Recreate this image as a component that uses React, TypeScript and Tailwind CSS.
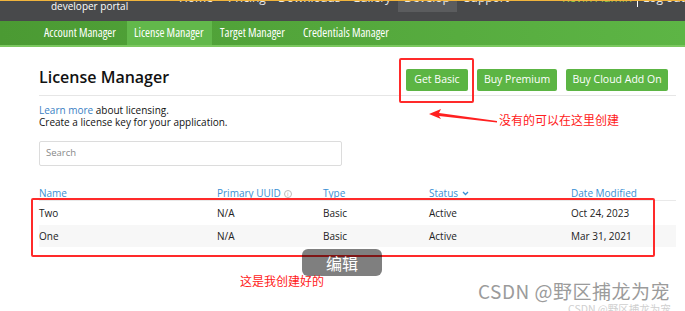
import React from "react";

const cjk = { fontFamily: '"Noto Sans CJK SC", "Noto Sans", sans-serif' };

export default function App() {
  const rows = [
    { name: "Two", uuid: "N/A", type: "Basic", status: "Active", date: "Oct 24, 2023", bg: "bg-white" },
    { name: "One", uuid: "N/A", type: "Basic", status: "Active", date: "Mar 31, 2021", bg: "bg-[#f7f7f7]" },
  ];
  return (
    <div
      className="relative w-[685px] h-[311px] overflow-hidden bg-white text-[#222]"
      style={{ fontFamily: '"Open Sans", "Noto Sans", sans-serif' }}
    >
      {/* top dark header */}
      <div className="relative h-[21px] bg-[#48494b] border-t border-[#f0b43c] overflow-hidden">
        <div className="absolute left-[51px] top-[0px] text-[10px] leading-[11px] text-white">developer portal</div>
        <div className="absolute left-[179px] top-[-9px] flex items-start text-[12px] leading-[12px] text-[#e8e8e8]">
          <span className="w-[49px]">Home</span>
          <span className="w-[50px]">Pricing</span>
          <span className="w-[74px]">Downloads</span>
          <span className="w-[46px]">Gallery</span>
          <span className="w-[59px] -mt-[2px] pt-[2px] pl-[6px] h-[22px] bg-[#5b5c5e]">Develop</span>
          <span className="ml-[7px]">Support</span>
        </div>
        <div className="absolute left-[562px] top-[-9px] flex items-start text-[12px] leading-[12px]">
          <span className="text-[#8cc63f] w-[75px]">Kevin Admin</span>
          <span className="text-white w-[6px] mt-[2px] border-l border-white h-[13px]"></span>
          <span className="text-[#e8e8e8]">Log out</span>
        </div>
      </div>

      {/* green sub nav */}
      <div className="h-[26px] bg-gradient-to-r from-[#4b9a33] to-[#5db545] flex items-stretch pl-[38px] text-[12px] [font-stretch:85%] text-white border-b-2 border-[#7cc860]">
        <div className="w-[89px] pl-[6px] flex items-center">Account Manager</div>
        <div className="w-[85px] pl-[7px] flex items-center bg-[#62b84b]">License Manager</div>
        <div className="w-[84px] pl-[8px] flex items-center">Target Manager</div>
        <div className="pl-[7px] flex items-center">Credentials Manager</div>
      </div>

      {/* content */}
      <div className="pl-[39px] w-[676px]">
        <div className="flex items-start justify-between mt-[22px] pr-[8px]">
          <h1 className="text-[16px] leading-[22px] font-semibold text-[#111] -mt-[3px]">License Manager</h1>
          <div className="flex gap-[9px]">
            <button className="h-[22px] w-[62px] rounded-[2px] bg-[#5cb544] text-white text-[10.5px]">Get Basic</button>
            <button className="h-[22px] w-[80px] rounded-[2px] bg-[#5cb544] text-white text-[10.5px]">Buy Premium</button>
            <button className="h-[22px] w-[102px] rounded-[2px] bg-[#5cb544] text-white text-[10.5px]">Buy Cloud Add On</button>
          </div>
        </div>
        <div className="mt-[4px] h-px bg-[#e6e6e6]" />
        <div className="mt-[9px] text-[10px] leading-[11.5px] text-[#111]">
          <div>
            <span className="text-[#3b7fc4]">Learn more</span> about licensing.
          </div>
          <div>Create a license key for your application.</div>
        </div>
        <div className="mt-[13px] w-[303px] h-[25px] border border-[#dcdcdc] rounded-[2px] flex items-center pl-[6px] text-[9.5px] text-[#888]">
          Search
        </div>

        {/* table */}
        <div className="mt-[20px] text-[10px]">
          <div className="grid grid-cols-[178px_106px_106px_142px_1fr] h-[15px] items-center text-[#3a8fd4] border-b border-[#e9e9e9]">
            <div>Name</div>
            <div className="flex items-center gap-[3px]">
              Primary UUID
              <span className="inline-flex w-[8px] h-[8px] rounded-full border border-[#bbb] text-[6px] leading-none text-[#aaa] items-center justify-center">i</span>
            </div>
            <div>Type</div>
            <div className="flex items-center gap-[4px]">
              Status
              <svg width="7" height="5" viewBox="0 0 7 5" fill="none">
                <path d="M1 1l2.5 2.5L6 1" stroke="#3a8fd4" strokeWidth="1.3" />
              </svg>
            </div>
            <div>Date Modified</div>
          </div>
          {rows.map((r, i) => (
            <div
              key={i}
              className={`grid grid-cols-[178px_106px_106px_142px_1fr] items-center text-[#222] ${r.bg} ${i === 0 ? "h-[24px]" : "h-[22px]"}`}
            >
              <div>{r.name}</div>
              <div>{r.uuid}</div>
              <div>{r.type}</div>
              <div>{r.status}</div>
              <div>{r.date}</div>
            </div>
          ))}
        </div>
      </div>

      {/* annotations */}
      <div className="absolute left-[399px] top-[58px] w-[75px] h-[45px] border-2 border-[#ff2a2a] rounded-[2px]" />
      <svg className="absolute left-[425px] top-[106px]" width="75" height="20" viewBox="0 0 75 20">
        <polygon points="4,8 16,3 14,7 72,15 72,16.5 14,10 16,13" fill="#ff2020" />
      </svg>
      <div className="absolute left-[499px] top-[113px] text-[12px] leading-[14px] text-[#ff2020]" style={cjk}>
        没有的可以在这里创建
      </div>
      <div className="absolute left-[31px] top-[198px] w-[624px] h-[59px] border-2 border-[#ff2a2a] rounded-[2px]" />
      <div className="absolute left-[302px] top-[249px] w-[80px] h-[27px] rounded-[6px] bg-black/50 flex items-center justify-center text-white text-[16px]" style={cjk}>
        编辑
      </div>
      <div className="absolute left-[240px] top-[274px] text-[12px] leading-[14px] text-[#ff2020]" style={cjk}>
        这是我创建好的
      </div>
      <div className="absolute left-[478px] top-[280px] text-[19px] leading-[22px] tracking-[0.5px] text-[#9b9b9b]" style={cjk}>
        CSDN @野区捕龙为宠
      </div>
      <div className="absolute left-[568px] top-[303px] text-[10.5px] leading-[11px] text-[#cfcfcf]" style={cjk}>
        CSDN @野区捕龙为宠
      </div>
    </div>
  );
}
